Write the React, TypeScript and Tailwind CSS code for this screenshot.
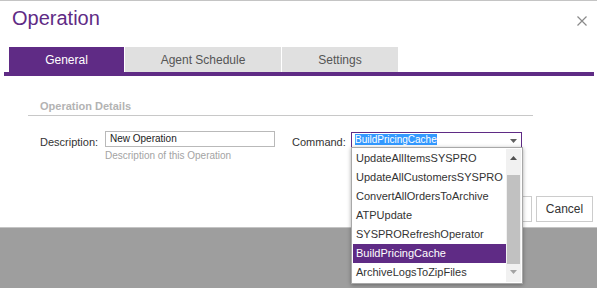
const items = [
  'UpdateAllItemsSYSPRO',
  'UpdateAllCustomersSYSPRO',
  'ConvertAllOrdersToArchive',
  'ATPUpdate',
  'SYSPRORefreshOperator',
  'BuildPricingCache',
  'ArchiveLogsToZipFiles',
]

export default function App() {
  const selected = 'BuildPricingCache'

  return (
    <div className="w-[597px] h-[288px] overflow-hidden bg-[#9e9e9e] font-['Liberation_Sans',Arial,sans-serif]">
      <div className="h-[228px] bg-white border-t border-b border-[#c4c4c4]">
        <div className="flex items-start justify-between pl-3 pr-[10px]">
          <h1 className="mt-[5px] text-[20px] leading-[24px] text-[#5f2b85]">Operation</h1>
          <button type="button" className="mt-[15px] text-[#8a8a8a]">
            <svg width="10" height="10" viewBox="0 0 10 10" fill="none" stroke="currentColor" strokeWidth="1.2">
              <path d="M0.5 0.5 L9.5 9.5 M9.5 0.5 L0.5 9.5" />
            </svg>
          </button>
        </div>

        <div className="ml-1 mr-[3px] mt-[17px] flex gap-px border-b-4 border-[#5f2b85] pl-[5px]">
          <div className="w-[115px] h-[25px] flex items-center justify-center bg-[#5f2b85] text-white text-[12px]">General</div>
          <div className="w-[156px] h-[25px] flex items-center justify-center bg-[#e0e0e0] text-[#555] text-[12px]">Agent Schedule</div>
          <div className="w-[116px] h-[25px] flex items-center justify-center bg-[#e0e0e0] text-[#555] text-[12px]">Settings</div>
        </div>

        <div className="ml-[28px] w-[505px] mt-6 pb-[2px] pl-3 border-b border-[#c8c8c8] text-[11px] leading-[13px] font-bold text-[#b3b3b3]">
          Operation Details
        </div>

        <div className="ml-[40px] mt-[15px] flex items-start">
          <label className="w-[65px] mt-[3px] text-[11px] leading-[16px] text-[#333]">Description:</label>
          <div className="flex flex-col">
            <div className="w-[170px] h-[16px] border border-[#b9b9b9] pl-1 text-[10px] leading-[14px] text-[#222]">New Operation</div>
            <div className="mt-[3px] text-[10px] leading-[12px] text-[#a3a3a3]">Description of this Operation</div>
          </div>
          <label className="ml-[17px] w-[59px] mt-[3px] text-[11px] leading-[16px] text-[#333]">Command:</label>
          <div className="relative z-10 mt-px">
            <div className="w-[171px] h-[16px] border border-[#5f2b85] flex items-start justify-between pl-[3px] pr-[4px]">
              <span className="mt-px bg-[#3399ff] text-white text-[10px] leading-[11px]">{selected}</span>
              <svg className="mt-[6px]" width="7" height="4" viewBox="0 0 7 4">
                <path d="M0 0 H7 L3.5 4 Z" fill="#606060" />
              </svg>
            </div>
            <div className="absolute left-0 top-[15px] w-[172px] h-[137px] bg-white border border-[#a8a8a8] shadow-[0_1px_4px_rgba(0,0,0,0.35)] p-px flex">
              <ul className="flex-1">
                {items.map((it) => (
                  <li
                    key={it}
                    className={
                      it === selected
                        ? 'h-[19px] pl-[3px] text-[11px] leading-[19px] bg-[#5f2b85] text-white'
                        : 'h-[19px] pl-[3px] text-[11px] leading-[19px] text-[#333]'
                    }
                  >
                    {it}
                  </li>
                ))}
              </ul>
              <div className="w-[15px] bg-[#f1f1f1] flex flex-col items-center">
                <svg className="mt-[7px]" width="7" height="4" viewBox="0 0 7 4">
                  <path d="M0 4 H7 L3.5 0 Z" fill="#505050" />
                </svg>
                <div className="mt-[15px] w-[13px] h-[89px] bg-[#c1c1c1]" />
                <svg className="mt-[6px]" width="7" height="4" viewBox="0 0 7 4">
                  <path d="M0 0 H7 L3.5 4 Z" fill="#a3a3a3" />
                </svg>
              </div>
            </div>
          </div>
        </div>

        <div className="mt-[34px] flex justify-end gap-1 pr-1">
          <button type="button" className="w-[50px] h-[26px] border border-[#cccccc] bg-white text-[12px] text-[#333]">Save</button>
          <button type="button" className="w-[57px] h-[26px] border border-[#cccccc] bg-white text-[12px] text-[#333]">Cancel</button>
        </div>
      </div>
    </div>
  )
}
